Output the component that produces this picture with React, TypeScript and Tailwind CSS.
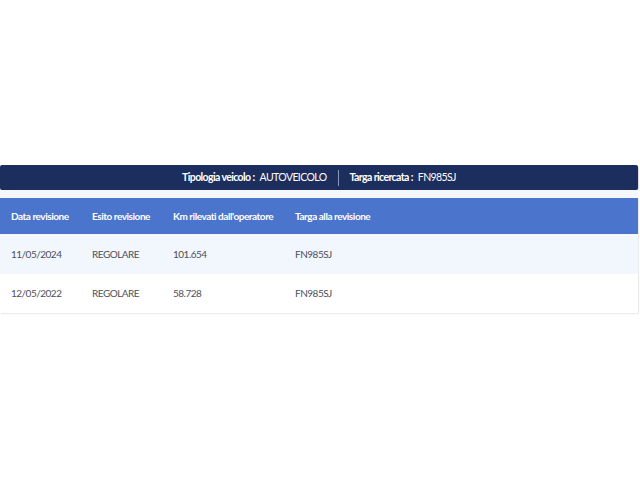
import React from "react";

const rows = [
  { data: "11/05/2024", esito: "REGOLARE", km: "101.654", targa: "FN985SJ" },
  { data: "12/05/2022", esito: "REGOLARE", km: "58.728", targa: "FN985SJ" },
];

const App: React.FC = () => {
  return (
    <div className="w-[640px] h-[480px] bg-white font-['Lato',sans-serif]">
      <div className="pt-[165px] w-[638px]">
        <div className="h-[25px] bg-[#1c2e5e] rounded-[2px] flex items-center justify-center text-white text-[10.5px] tracking-[-0.6px] whitespace-nowrap shadow-[1px_1px_1px_rgba(0,0,0,0.15)]">
          <span className="font-bold">Tipologia veicolo :</span>
          <span className="ml-[5px]">AUTOVEICOLO</span>
          <span className="mx-[11px] w-px h-[16px] bg-[#8a97b8]" />
          <span className="font-bold">Targa ricercata :</span>
          <span className="ml-[5px]">FN985SJ</span>
        </div>
        <div className="h-[8px] bg-[#f5f7fb]" />
        <table className="w-full border-collapse table-fixed shadow-[1px_1px_1px_rgba(0,0,0,0.08)]">
          <thead>
            <tr className="h-[36px] bg-[#4b74cd] text-white text-[10px] tracking-[-0.45px] text-left whitespace-nowrap">
              <th className="pl-[11px] w-[81px] font-bold">Data revisione</th>
              <th className="pl-[11px] w-[81px] font-bold">Esito revisione</th>
              <th className="pl-[11px] w-[122px] font-bold">Km rilevati dall'operatore</th>
              <th className="pl-[11px] font-bold">Targa alla revisione</th>
            </tr>
          </thead>
          <tbody className="text-[10px] tracking-[-0.5px] text-[#4d4f5c]">
            {rows.map((r, i) => (
              <tr key={i} className={i % 2 === 0 ? "h-[40px] bg-[#f2f6fd]" : "h-[39px] bg-white"}>
                <td className="pl-[11px]">{r.data}</td>
                <td className="pl-[11px]">{r.esito}</td>
                <td className="pl-[11px]">{r.km}</td>
                <td className="pl-[11px]">{r.targa}</td>
              </tr>
            ))}
          </tbody>
        </table>
      </div>
    </div>
  );
};

export default App;
